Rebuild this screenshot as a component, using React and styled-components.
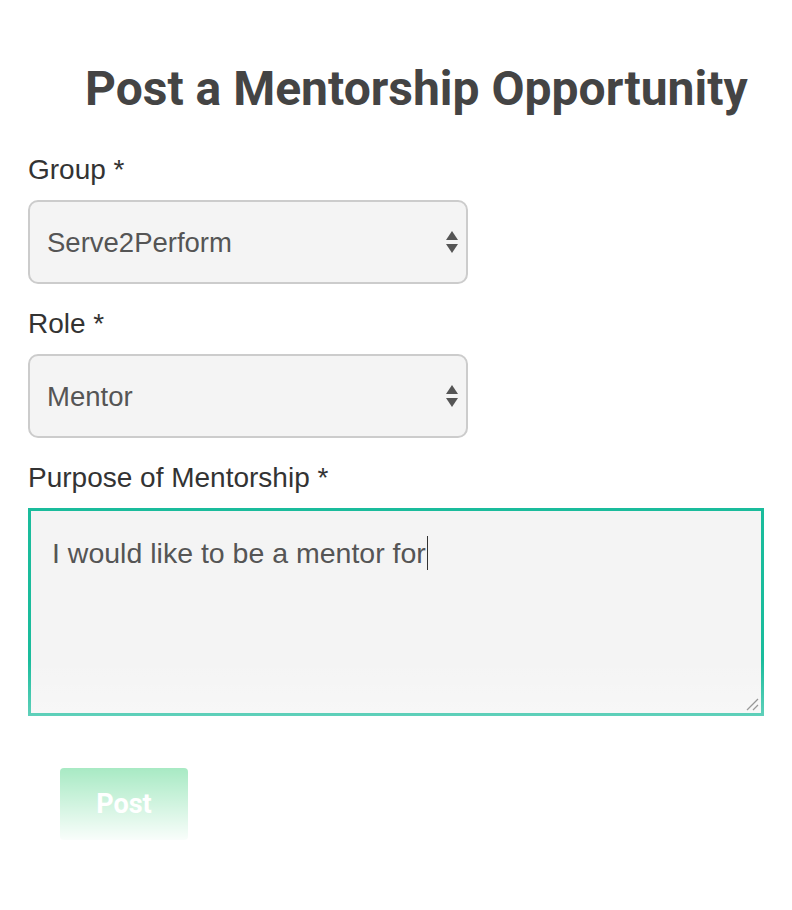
import styled, { createGlobalStyle } from "styled-components";

const Global = createGlobalStyle`
  html, body {
    margin: 0;
    padding: 0;
    background: #fff;
  }
  body {
    font-family: "Liberation Sans", Arial, sans-serif;
  }
`;

const Page = styled.div`
  position: relative;
  width: 792px;
  height: 910px;
  box-sizing: border-box;
  padding: 58px 28px 0 28px;
  overflow: hidden;
`;

const Title = styled.h1`
  margin: 0 0 34px 0;
  padding-left: 57px;
  font-family: Roboto, "Liberation Sans", sans-serif;
  font-weight: 700;
  font-size: 48px;
  line-height: 62px;
  color: #444;
  white-space: nowrap;
`;

const Field = styled.div`
  display: flex;
  flex-direction: column;
  gap: 14px;
  margin-bottom: 24px;
`;

const Label = styled.label`
  font-size: 28px;
  line-height: 32px;
  color: #333;
`;

const SelectWrap = styled.div`
  position: relative;
  width: 440px;
`;

const Select = styled.select`
  appearance: none;
  -webkit-appearance: none;
  width: 100%;
  height: 84px;
  box-sizing: border-box;
  padding: 0 40px 0 17px;
  border: 2px solid #ccc;
  border-radius: 10px;
  background: #f4f4f4;
  font-family: "Liberation Sans", Arial, sans-serif;
  font-size: 27.5px;
  color: #555;
  outline: none;
`;

const Arrows = styled.svg`
  position: absolute;
  right: 9px;
  top: 50%;
  transform: translateY(-50%);
  pointer-events: none;
`;

const TextBox = styled.div`
  position: relative;
  width: 736px;
  height: 208px;
  box-sizing: border-box;
  border: 3px solid #1abc9c;
  background: #f4f4f4;
  padding: 24px 21px;
  font-size: 28.5px;
  line-height: 36px;
  color: #555;
`;

const Caret = styled.span`
  display: inline-block;
  width: 1px;
  height: 34px;
  margin-left: 1px;
  vertical-align: -7px;
  background: #333;
`;

const Grip = styled.svg`
  position: absolute;
  right: 2px;
  bottom: 2px;
`;

const Actions = styled.div`
  padding: 28px 0 0 32px;
`;

const Button = styled.button`
  width: 128px;
  height: 72px;
  border: none;
  border-radius: 4px;
  background: #2ecc71;
  color: #fff;
  font-family: Roboto, "Liberation Sans", sans-serif;
  font-weight: 700;
  font-size: 27px;
`;

const Fade = styled.div`
  position: absolute;
  left: 0;
  right: 0;
  top: 660px;
  height: 185px;
  background: linear-gradient(
    to bottom,
    rgba(255, 255, 255, 0),
    rgba(255, 255, 255, 1)
  );
  pointer-events: none;
`;

function SelectField({ label, value }) {
  return (
    <Field>
      <Label>{label}</Label>
      <SelectWrap>
        <Select defaultValue={value}>
          <option>{value}</option>
        </Select>
        <Arrows width="14" height="24" viewBox="0 0 14 24">
          <path d="M7 1 L13 10 L1 10 Z" fill="#555" />
          <path d="M1 14 L13 14 L7 23 Z" fill="#555" />
        </Arrows>
      </SelectWrap>
    </Field>
  );
}

export default function App() {
  return (
    <>
      <Global />
      <Page>
        <Title>Post a Mentorship Opportunity</Title>
        <SelectField label="Group *" value="Serve2Perform" />
        <SelectField label="Role *" value="Mentor" />
        <Field>
          <Label>Purpose of Mentorship *</Label>
          <TextBox>
            I would like to be a mentor for
            <Caret />
            <Grip width="14" height="14" viewBox="0 0 14 14">
              <path d="M2 13 L13 2 M8 13 L13 8" stroke="#777" strokeWidth="1.3" />
            </Grip>
          </TextBox>
        </Field>
        <Actions>
          <Button>Post</Button>
        </Actions>
        <Fade />
      </Page>
    </>
  );
}
